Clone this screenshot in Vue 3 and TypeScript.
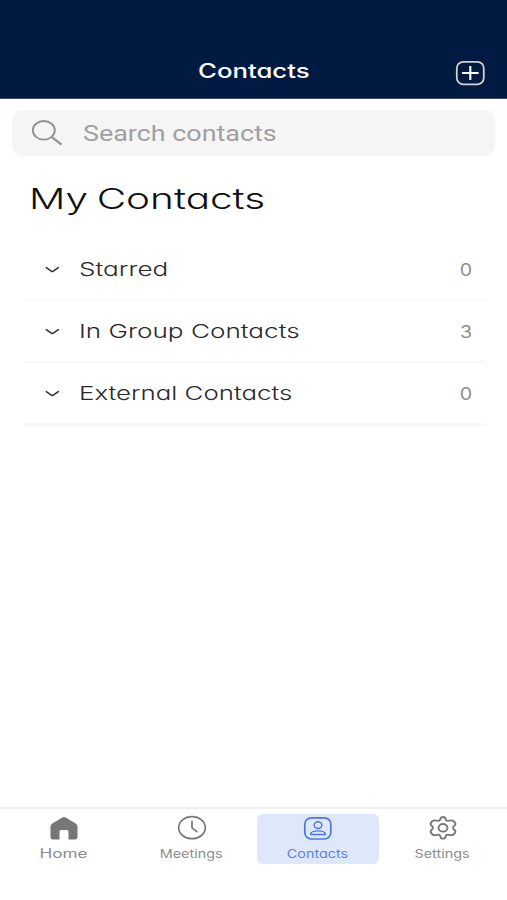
<script setup lang="ts">
interface Group {
  name: string
  cls: string
  count: number
}

const groups: Group[] = [
  { name: 'Starred', cls: 'starred', count: 0 },
  { name: 'In Group Contacts', cls: 'in-group', count: 3 },
  { name: 'External Contacts', cls: 'external', count: 0 },
]
</script>

<template>
  <div class="app">
    <header class="header">
      <h1 class="title"><span class="wide">Contacts</span></h1>
      <button class="add" aria-label="Add contact">
        <svg width="30" height="26" viewBox="0 0 30 26" fill="none">
          <rect x="1.8" y="1.8" width="27" height="22.5" rx="6.5" stroke="#d5d0cd" stroke-width="1.8" />
          <path d="M15.3 6V20M7 13H23.6" stroke="#fff" stroke-width="2.1" />
        </svg>
      </button>
    </header>

    <main class="main">
      <div class="search">
        <svg class="search-icon" width="32" height="27" viewBox="0 0 32 27" fill="none" stroke="#939393" stroke-width="1.9">
          <ellipse cx="12.8" cy="10.3" rx="11" ry="9.3" />
          <path d="M20.5 16.9L30.5 24.6" stroke-width="2.2" />
        </svg>
        <span class="placeholder wide">Search contacts</span>
      </div>

      <h2 class="heading"><span class="wide">My Contacts</span></h2>

      <ul class="groups">
        <li v-for="group in groups" :key="group.name" class="group">
          <svg class="chevron" width="16" height="8" viewBox="0 0 16 8" fill="none" stroke="#333" stroke-width="1.6" stroke-linecap="round" stroke-linejoin="round">
            <path d="M2.3 1.7L7.3 5.1Q8.3 5.8 9.3 5.1L14.3 1.7" />
          </svg>
          <span class="name wide" :class="group.cls">{{ group.name }}</span>
          <span class="count wide">{{ group.count }}</span>
        </li>
      </ul>
    </main>

    <nav class="tabs">
      <a class="tab home">
        <svg width="30" height="26" viewBox="0 0 30 26">
          <path fill="#777" d="M12.8 2.7Q15 1.2 17.2 2.7L27 8.7Q28.5 9.7 28.5 11.2V22Q28.5 24.4 26.5 24.4H19.5V16.5Q19.5 14.9 17.9 14.9H12.1Q10.5 14.9 10.5 16.5V24.4H3.5Q1.5 24.4 1.5 22V11.2Q1.5 9.7 3 8.7Z" />
        </svg>
        <span class="label wide">Home</span>
      </a>
      <a class="tab meetings">
        <svg width="30" height="26" viewBox="0 0 30 26" fill="none" stroke="#777" stroke-width="1.7">
          <ellipse cx="15" cy="12.7" rx="13.3" ry="11" />
          <path d="M15 6.3V12.8L19.8 16.7" stroke-linecap="round" stroke-linejoin="round" />
        </svg>
        <span class="label wide">Meetings</span>
      </a>
      <a class="tab contacts active">
        <svg width="30" height="26" viewBox="0 0 30 26" fill="none" stroke="#4d76e0" stroke-width="1.7">
          <rect x="1.8" y="2.8" width="26" height="21.2" rx="6.5" />
          <ellipse cx="15" cy="10.1" rx="3.9" ry="3.4" stroke-width="1.4" />
          <path d="M7.6 18.9C8.6 14.9 21.4 14.9 22.4 18.9Q22.4 19.5 21.6 19.5H8.4Q7.6 19.5 7.6 18.9Z" stroke-width="1.4" />
        </svg>
        <span class="label wide">Contacts</span>
      </a>
      <a class="tab settings">
        <svg width="30" height="26" viewBox="0 0 30 26" fill="none" stroke="#777" stroke-width="1.9" stroke-linejoin="round">
          <path d="M12.3 4.3Q12.7 2 15 2Q17.3 2 17.7 4.3Q18.3 6.5 21 5.7Q24 4.8 25.7 6.3Q28.8 9 26.4 10.6Q23.8 12.8 26.4 14.9Q28.8 16.6 25.7 19.2Q24 20.7 21 19.8Q18.3 19 17.7 21.3Q17.3 23.6 15 23.6Q12.7 23.6 12.3 21.3Q11.7 19 9 19.8Q6 20.7 4.3 19.2Q1.2 16.6 3.6 14.9Q6.2 12.8 3.6 10.6Q1.2 9 4.3 6.3Q6 4.8 9 5.7Q11.7 6.5 12.3 4.3Z" />
          <ellipse cx="15" cy="12.8" rx="4.5" ry="3.8" />
        </svg>
        <span class="label wide">Settings</span>
      </a>
    </nav>
  </div>
</template>

<style>
body {
  margin: 0;
  background: #fff;
}
</style>

<style scoped>
.app {
  display: flex;
  flex-direction: column;
  box-sizing: border-box;
  width: 100%;
  height: 900px;
  background: #fff;
  font-family: Inter, "Liberation Sans", sans-serif;
  font-feature-settings: "cv11";
}
.wide {
  display: inline-block;
  white-space: nowrap;
  transform: scaleX(1.32);
  transform-origin: left center;
}
.header {
  display: flex;
  align-items: flex-start;
  justify-content: space-between;
  box-sizing: border-box;
  height: 99px;
  padding: 58px 22px 0 198px;
  background: #001a41;
  border-bottom: 1px solid #4d4a5c;
}
.title {
  margin: 0;
  color: #fff;
  font-size: 19.5px;
  font-weight: 500;
  line-height: 26px;
}
.add {
  display: flex;
  margin: 2px 0 0;
  padding: 0;
  border: 0;
  background: none;
}
.main {
  flex: 1;
  padding: 11px 12px 0;
}
.search {
  display: flex;
  align-items: center;
  box-sizing: border-box;
  height: 46px;
  padding-left: 19px;
  border-radius: 11px;
  background: #f5f5f5;
}
.placeholder {
  margin-left: 20px;
  padding-top: 1px;
  color: #a0a0a0;
  font-family: Roboto, sans-serif;
  font-size: 22px;
  line-height: 26px;
  transform: scaleX(1.222);
}
.heading {
  margin: 23px 0 0 17px;
  color: #111;
  font-size: 28.5px;
  font-weight: 300;
  line-height: 40px;
}
.heading .wide {
  word-spacing: -2px;
  transform: scaleX(1.42);
}
.groups {
  margin: 20px 10px 0 12px;
  padding: 0;
  list-style: none;
}
.group {
  display: flex;
  align-items: center;
  box-sizing: border-box;
  height: 62px;
  padding: 2px 13px 0 20px;
  border-bottom: 2px solid #f8f8f8;
}
.group:last-child {
  height: 63px;
  border-bottom-width: 3px;
}
.name {
  margin-left: 19px;
  color: #2a2a2a;
  font-size: 19px;
  font-weight: 300;
  line-height: 26px;
  transform: scaleX(1.375);
}
.external {
  transform: scaleX(1.36);
}
.count {
  width: 12px;
  margin-left: auto;
  color: #8e8e8e;
  font-size: 17px;
  text-align: center;
  transform: scaleX(1.15);
  transform-origin: center;
}
.tabs {
  display: grid;
  grid-template-columns: 127px 129px 125px 123px;
  box-sizing: border-box;
  height: 93px;
  padding-top: 5px;
  border-top: 2px solid #f0f0f1;
}
.tab {
  display: flex;
  flex-direction: column;
  align-items: center;
  box-sizing: border-box;
  height: 50px;
  padding-top: 1px;
  color: #8c8c8c;
}
.active {
  margin: 0 2px 0 1px;
  border-radius: 6px;
  background: #dfe8fb;
  color: #5f82e2;
}
.label {
  margin-top: 5px;
  font-size: 11.5px;
  line-height: 17px;
  transform: scaleX(1.25);
  transform-origin: center;
}
.home .label {
  margin-top: 4px;
  font-size: 12.5px;
  transform: scaleX(1.37);
}
</style>
